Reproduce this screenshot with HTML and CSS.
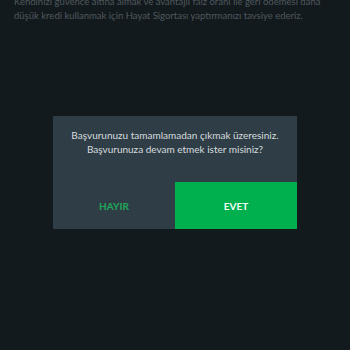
FILE: index.html
```html
<!DOCTYPE html>
<html lang="tr">
<head>
  <meta charset="UTF-8">
  <title>Başvuru</title>
  <link rel="stylesheet" href="styles.css">
</head>
<body>
<div class="page">
  <div class="intro">
    Kendinizi güvence altına almak ve avantajlı faiz oranı ile geri ödemesi daha
    düşük kredi kullanmak için Hayat Sigortası yaptırmanızı tavsiye ederiz.
  </div>

  <div class="dialog">
    <div class="dialog-text">
      Başvurunuzu tamamlamadan çıkmak üzeresiniz.<br>
      Başvurunuza devam etmek ister misiniz?
    </div>
    <div class="dialog-buttons">
      <div class="btn btn-no">HAYIR</div>
      <div class="btn btn-yes">EVET</div>
    </div>
  </div>
</div>
</body>
</html>
```

FILE: styles.css
```css
html, body {
  margin: 0;
  padding: 0;
  background: #131a1d;
}
.page {
  width: 350px;
  height: 350px;
  font-family: 'Lato', 'Open Sans', sans-serif;
  overflow: hidden;
}
.intro {
  margin-top: -5px;
  padding: 0 14px;
  font-size: 9.5px;
  line-height: 14px;
  color: #4e585d;
}
.dialog {
  margin: 93px 0 0 53px;
  width: 244px;
  background: #2f3e46;
}
.dialog-text {
  box-sizing: border-box;
  height: 66px;
  padding: 12px 10px 0 10px;
  text-align: center;
  font-size: 10px;
  line-height: 14px;
  color: #d6dcdf;
}
.dialog-buttons {
  display: flex;
  height: 47px;
}
.btn {
  flex: 1;
  display: flex;
  align-items: center;
  justify-content: center;
  font-size: 10px;
  font-weight: bold;
}
.btn-no {
  color: #1fa85a;
}
.btn-yes {
  background: #00b04f;
  color: #f2fff7;
}
```
